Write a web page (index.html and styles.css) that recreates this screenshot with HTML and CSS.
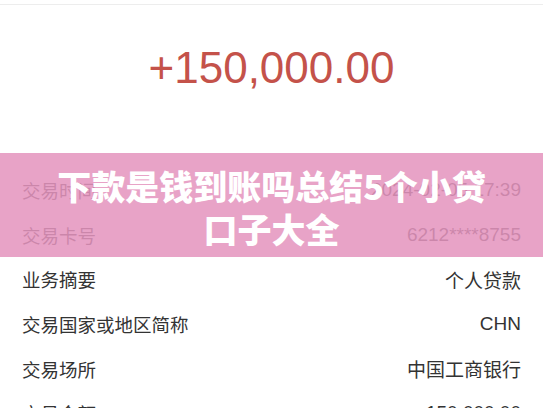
FILE: index.html
```html
<!DOCTYPE html>
<html lang="zh-CN">
<head>
  <meta charset="UTF-8">
  <title>下款是钱到账吗</title>
  <link rel="stylesheet" href="styles.css">
</head>
<body>
  <div class="page">
    <div class="amount">+150,000.00</div>
    <div class="rows">
      <div class="row"><span class="label">交易时间</span><span>2024-02-05 17:39</span></div>
      <div class="row"><span class="label">交易卡号</span><span>6212****8755</span></div>
      <div class="row"><span class="label">业务摘要</span><span>个人贷款</span></div>
      <div class="row"><span class="label">交易国家或地区简称</span><span>CHN</span></div>
      <div class="row"><span class="label">交易场所</span><span>中国工商银行</span></div>
      <div class="row"><span class="label">交易金额</span><span>150,000.00</span></div>
    </div>
    <div class="banner">
      <h1>下款是钱到账吗总结5个小贷<br>口子大全</h1>
    </div>
  </div>
</body>
</html>
```

FILE: styles.css
```css
body { margin: 0; background: #fff; font-family: "Liberation Sans", "Noto Sans CJK SC", sans-serif; }
.page { position: relative; height: 408px; overflow: hidden; border-top: 1px solid #ededed; margin-top: 4px; }
.amount { height: 163px; display: flex; align-items: center; justify-content: center; padding-bottom: 37px; box-sizing: border-box; font-size: 44px; color: #c4524a; }
.rows { padding: 0 22px; }
.row { height: 44.6px; display: flex; justify-content: space-between; align-items: center; font-size: 19px; color: #333; }
.label { font-size: 18.5px; }
.banner { position: absolute; left: 0; right: 0; top: 148px; height: 104px; background: rgba(228, 148, 190, 0.86); display: flex; justify-content: center; }
.banner h1 { margin: 11px 0 0; font-family: "Noto Sans CJK SC", sans-serif; font-weight: 900; font-size: 34px; line-height: 43px; color: #fff; text-align: center; }
```
